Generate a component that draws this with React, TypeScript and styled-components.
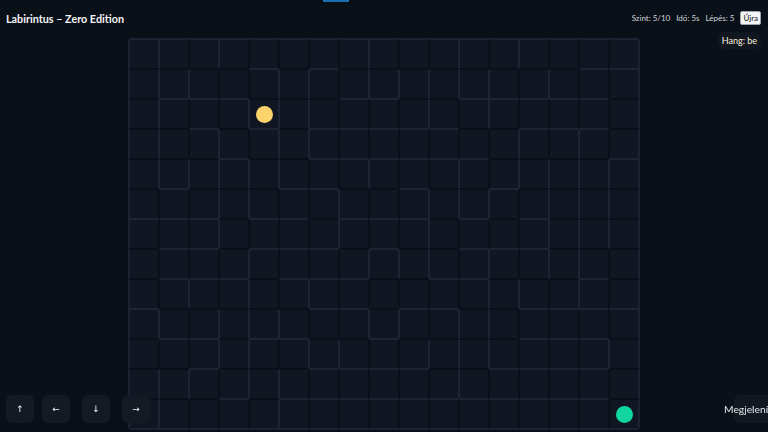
import React from 'react'
import styled, { createGlobalStyle } from 'styled-components'

const COLS = 17
const ROWS = 13

// inner vertical walls: boundary (between col k-1 and k) -> rows
const vWalls: Record<number, number[]> = {
  1: [0, 1, 2, 3, 4, 9, 11, 12],
  2: [1, 4, 8, 11],
  3: [0, 3, 4, 5, 6, 9, 10],
  4: [2, 4, 5, 7, 8, 9, 10, 11],
  5: [1, 2, 3, 4, 9, 11, 12],
  6: [1, 2, 3, 8, 10],
  7: [5, 6, 10],
  8: [0, 1, 4, 7, 9],
  9: [1, 7, 9],
  10: [1, 2, 5, 6, 7, 10],
  11: [0, 1, 4, 5, 9, 10, 11],
  12: [1, 2, 5, 7, 8, 9, 10],
  13: [0, 3, 4, 8],
  14: [1, 4, 5, 6, 7],
  15: [3, 4, 5, 6, 7, 8],
  16: [4, 5, 6, 10],
}

// inner horizontal walls: boundary (between row b-1 and b) -> cols
const hWalls: Record<number, number[]> = {
  1: [4, 6, 15, 16],
  2: [1, 2, 3, 7, 8, 11, 12, 13, 14, 15],
  3: [2, 4, 6, 7, 8, 9, 10, 13, 14, 15],
  4: [3, 6, 7, 8, 9, 10, 11, 16],
  5: [1, 5, 6, 9, 12],
  6: [0, 1, 2, 4, 5, 7, 8, 9, 11, 13],
  7: [1, 2, 4, 5, 6, 8, 11, 12, 13],
  8: [1, 2, 3, 5, 6, 7, 10, 11, 15],
  9: [0, 6, 7, 9, 10, 13, 14, 15, 16],
  10: [1, 2, 4, 5, 8, 13, 14, 15],
  11: [2, 6, 7, 8, 9, 12, 13, 14, 15],
  12: [3, 5, 6, 7, 8, 9, 10, 11, 12, 13, 14, 15],
}

const player = { r: 2, c: 4 }
const goal = { r: 12, c: 16 }

const hasV = (k: number, r: number) => k === 0 || k === COLS || !!vWalls[k]?.includes(r)
const hasH = (b: number, c: number) => b === 0 || b === ROWS || !!hWalls[b]?.includes(c)

export default function App() {
  const cells = []
  for (let r = 0; r < ROWS; r++) {
    for (let c = 0; c < COLS; c++) {
      const isPlayer = player.r === r && player.c === c
      const isGoal = goal.r === r && goal.c === c
      cells.push(
        <Cell
          key={`${r}-${c}`}
          $top={hasH(r, c)}
          $bottom={hasH(r + 1, c)}
          $left={hasV(c, r)}
          $right={hasV(c + 1, r)}
        >
          {isPlayer && <Dot $color="#fdd36b" />}
          {isGoal && <Dot $color="#0fd69e" />}
        </Cell>
      )
    }
  }

  return (
    <>
      <GlobalStyle />
      <TopMarker />
      <Header>
        <Title>Labirintus – Zero Edition</Title>
        <Stats>
          <span>Szint: 5/10</span>
          <span>Idő: 5s</span>
          <span>Lépés: 5</span>
          <ResetButton>Újra</ResetButton>
        </Stats>
      </Header>
      <BoardWrap>
        <Board>{cells}</Board>
      </BoardWrap>
      <SoundPill>Hang: be</SoundPill>
      <Controls>
        <ArrowButton>↑</ArrowButton>
        <ArrowButton $gap={8}>←</ArrowButton>
        <ArrowButton $gap={12}>↓</ArrowButton>
        <ArrowButton $gap={12}>→</ArrowButton>
      </Controls>
      <ViewButton><span>Megjelenítés</span></ViewButton>
    </>
  )
}

const GlobalStyle = createGlobalStyle`
  html, body {
    margin: 0;
    background: #0a1018;
    color: #e5e7eb;
    font-family: Lato, "Open Sans", sans-serif;
    overflow: hidden;
  }
`

const TopMarker = styled.div`
  position: fixed;
  top: 0;
  left: 323px;
  width: 26px;
  height: 2px;
  background: #1d6db3;
`

const Header = styled.header`
  display: flex;
  align-items: center;
  justify-content: space-between;
  height: 36px;
  padding: 0 7px 0 6px;
`

const Title = styled.h1`
  margin: 0;
  font-size: 10.8px;
  font-weight: 700;
  color: #f3f4f6;
`

const Stats = styled.div`
  display: flex;
  align-items: center;
  gap: 6px;
  font-size: 8px;
  color: #d1d5db;
`

const ResetButton = styled.button`
  font-family: inherit;
  font-size: 8px;
  color: #111;
  background: #f3f4f6;
  border: 1px solid #9ca3af;
  border-radius: 2px;
  padding: 1px 2px;
`

const BoardWrap = styled.main`
  display: flex;
  justify-content: center;
  margin-top: 2px;
`

const Board = styled.div`
  display: grid;
  grid-template-columns: repeat(${COLS}, 30px);
  grid-auto-rows: 30px;
  border: 1px solid #1b2130;
  border-radius: 3px;
  background: #0c1119;
  overflow: hidden;
`

const WALL = '#1e2433'
const GRID = '#0b1018'

const Cell = styled.div<{ $top: boolean; $right: boolean; $bottom: boolean; $left: boolean }>`
  box-sizing: border-box;
  display: flex;
  align-items: center;
  justify-content: center;
  background: #111722;
  border-style: solid;
  border-width: 1px;
  border-top-color: ${(p) => (p.$top ? WALL : GRID)};
  border-right-color: ${(p) => (p.$right ? WALL : GRID)};
  border-bottom-color: ${(p) => (p.$bottom ? WALL : GRID)};
  border-left-color: ${(p) => (p.$left ? WALL : GRID)};
`

const Dot = styled.div<{ $color: string }>`
  width: 17px;
  height: 17px;
  border-radius: 50%;
  background: ${(p) => p.$color};
`

const SoundPill = styled.div`
  position: fixed;
  top: 32px;
  right: 7px;
  height: 17px;
  padding: 0 4px;
  display: flex;
  align-items: center;
  border-radius: 6px;
  background: #111721;
  color: #fbf1d9;
  font-size: 9px;
`

const Controls = styled.nav`
  position: fixed;
  left: 6px;
  bottom: 9px;
  display: flex;
`

const ArrowButton = styled.button<{ $gap?: number }>`
  width: 28px;
  height: 28px;
  margin-left: ${(p) => p.$gap ?? 0}px;
  padding: 0;
  border: none;
  border-radius: 6px;
  background: #141a24;
  color: #f3f4f6;
  font-family: "DejaVu Sans", sans-serif;
  font-size: 9px;
  display: flex;
  align-items: center;
  justify-content: center;
`

const ViewButton = styled.button`
  position: fixed;
  left: 734px;
  bottom: 9px;
  width: 40px;
  height: 28px;
  padding: 0;
  border: none;
  border-radius: 6px;
  background: #121821;
  color: #e5e7eb;
  font-family: inherit;
  font-size: 10.3px;
  text-align: left;
  white-space: nowrap;
  overflow: visible;

  span {
    margin-left: -10px;
  }
`
